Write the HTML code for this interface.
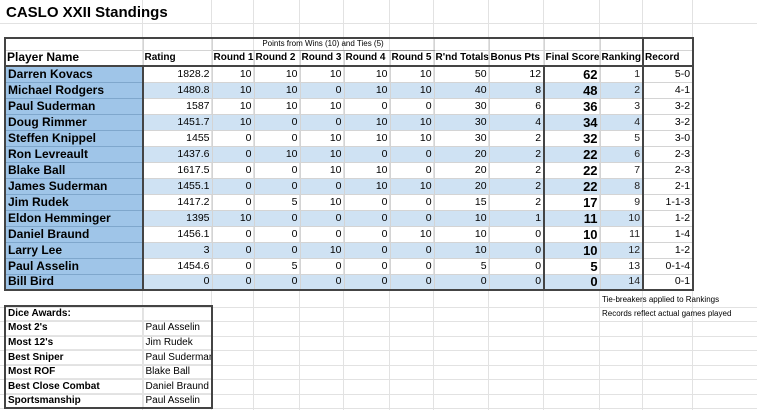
<!DOCTYPE html>
<html><head><meta charset="utf-8"><style>
body{margin:0;width:757px;height:410px;background:#fff;position:relative;overflow:hidden;font-family:"Liberation Sans",Arial,sans-serif;color:#000}
.v{position:absolute;width:1px;background:#e2e2e2;top:0;height:410px}
.h{position:absolute;height:1px;background:#e2e2e2;left:0;width:757px}
.t{position:absolute;white-space:nowrap}
table{border-collapse:collapse;table-layout:fixed;position:absolute}
td{padding:0 2px;overflow:hidden;white-space:nowrap;border:1px solid #d4d4d4;line-height:13px}
#m{left:4px;top:37px;width:689px;border:2px solid #444;font-size:10.5px}
#m tr{height:16px}
#m td{text-align:right}
#m td.n{text-align:left;font-weight:bold;font-size:12px;background:#9fc5e8;border-right:2px solid #444;border-bottom:1px solid #7fa7cc}
#m tr.b td{background:#cfe2f3}
#m tr.b td.n{background:#9fc5e8}
#m tr.b td.r{background:#fff}
#m td.f{font-weight:bold;font-size:13px;border-left:2px solid #444}
#m td.k{border-right:2px solid #444;color:#222}
#m tr.hd td{font-weight:bold;text-align:left;border-bottom:2px solid #444;font-size:10px;padding:0 1px}
#d{left:4px;top:305px;width:209px;border:2px solid #444;font-size:10px}
#d tr{height:14.6px}
#d td{border:1px solid #e4e4e4}
#d td.l{font-weight:bold}
</style></head><body>
<div class="v" style="left:142px"></div><div class="v" style="left:211px"></div><div class="v" style="left:253px"></div><div class="v" style="left:299px"></div><div class="v" style="left:343px"></div><div class="v" style="left:389px"></div><div class="v" style="left:433px"></div><div class="v" style="left:488px"></div><div class="v" style="left:543px"></div><div class="v" style="left:599px"></div><div class="v" style="left:642px"></div><div class="v" style="left:692px"></div>
<div class="h" style="top:23px"></div><div class="h" style="top:307px"></div><div class="h" style="top:321px"></div><div class="h" style="top:336px"></div><div class="h" style="top:350px"></div><div class="h" style="top:365px"></div><div class="h" style="top:379px"></div><div class="h" style="top:394px"></div><div class="h" style="top:408px"></div>
<div class="t" style="left:6px;top:4px;font-size:15px;font-weight:bold">CASLO XXII Standings</div>
<table id="m">
<colgroup><col style="width:138px"><col style="width:69px"><col style="width:42px"><col style="width:46px"><col style="width:44px"><col style="width:46px"><col style="width:44px"><col style="width:55px"><col style="width:55px"><col style="width:56px"><col style="width:43px"><col style="width:50px"></colgroup>
<tr style="height:12px"><td style="border-right:1px solid #d4d4d4"></td><td></td><td colspan="5" style="font-size:8px;line-height:10px;text-align:center;border-bottom:1px solid #999">Points from Wins (10) and Ties (5)</td><td></td><td></td><td></td><td style="border-right:2px solid #444"></td><td></td></tr>
<tr class="hd" style="height:16px"><td style="font-size:12px;border-right:1px solid #d4d4d4">Player Name</td><td>Rating</td><td>Round 1</td><td>Round 2</td><td>Round 3</td><td>Round 4</td><td>Round 5</td><td>R'nd Totals</td><td>Bonus Pts</td><td>Final Score</td><td style="border-right:2px solid #444">Ranking</td><td>Record</td></tr>
<tr><td class="n">Darren Kovacs</td><td>1828.2</td><td>10</td><td>10</td><td>10</td><td>10</td><td>10</td><td>50</td><td>12</td><td class="f">62</td><td class="k">1</td><td class="r">5-0</td></tr>
<tr class="b"><td class="n">Michael Rodgers</td><td>1480.8</td><td>10</td><td>10</td><td>0</td><td>10</td><td>10</td><td>40</td><td>8</td><td class="f">48</td><td class="k">2</td><td class="r">4-1</td></tr>
<tr><td class="n">Paul Suderman</td><td>1587</td><td>10</td><td>10</td><td>10</td><td>0</td><td>0</td><td>30</td><td>6</td><td class="f">36</td><td class="k">3</td><td class="r">3-2</td></tr>
<tr class="b"><td class="n">Doug Rimmer</td><td>1451.7</td><td>10</td><td>0</td><td>0</td><td>10</td><td>10</td><td>30</td><td>4</td><td class="f">34</td><td class="k">4</td><td class="r">3-2</td></tr>
<tr><td class="n">Steffen Knippel</td><td>1455</td><td>0</td><td>0</td><td>10</td><td>10</td><td>10</td><td>30</td><td>2</td><td class="f">32</td><td class="k">5</td><td class="r">3-0</td></tr>
<tr class="b"><td class="n">Ron Levreault</td><td>1437.6</td><td>0</td><td>10</td><td>10</td><td>0</td><td>0</td><td>20</td><td>2</td><td class="f">22</td><td class="k">6</td><td class="r">2-3</td></tr>
<tr><td class="n">Blake Ball</td><td>1617.5</td><td>0</td><td>0</td><td>10</td><td>10</td><td>0</td><td>20</td><td>2</td><td class="f">22</td><td class="k">7</td><td class="r">2-3</td></tr>
<tr class="b"><td class="n">James Suderman</td><td>1455.1</td><td>0</td><td>0</td><td>0</td><td>10</td><td>10</td><td>20</td><td>2</td><td class="f">22</td><td class="k">8</td><td class="r">2-1</td></tr>
<tr><td class="n">Jim Rudek</td><td>1417.2</td><td>0</td><td>5</td><td>10</td><td>0</td><td>0</td><td>15</td><td>2</td><td class="f">17</td><td class="k">9</td><td class="r">1-1-3</td></tr>
<tr class="b"><td class="n">Eldon Hemminger</td><td>1395</td><td>10</td><td>0</td><td>0</td><td>0</td><td>0</td><td>10</td><td>1</td><td class="f">11</td><td class="k">10</td><td class="r">1-2</td></tr>
<tr><td class="n">Daniel Braund</td><td>1456.1</td><td>0</td><td>0</td><td>0</td><td>0</td><td>10</td><td>10</td><td>0</td><td class="f">10</td><td class="k">11</td><td class="r">1-4</td></tr>
<tr class="b"><td class="n">Larry Lee</td><td>3</td><td>0</td><td>0</td><td>10</td><td>0</td><td>0</td><td>10</td><td>0</td><td class="f">10</td><td class="k">12</td><td class="r">1-2</td></tr>
<tr><td class="n">Paul Asselin</td><td>1454.6</td><td>0</td><td>5</td><td>0</td><td>0</td><td>0</td><td>5</td><td>0</td><td class="f">5</td><td class="k">13</td><td class="r">0-1-4</td></tr>
<tr class="b"><td class="n">Bill Bird</td><td>0</td><td>0</td><td>0</td><td>0</td><td>0</td><td>0</td><td>0</td><td>0</td><td class="f">0</td><td class="k">14</td><td class="r">0-1</td></tr>
</table>
<div class="t" style="left:602px;top:295px;font-size:8px">Tie-breakers applied to Rankings</div>
<div class="t" style="left:602px;top:309px;font-size:8px">Records reflect actual games played</div>
<table id="d">
<colgroup><col style="width:138px"><col style="width:69px"></colgroup>
<tr><td class="l">Dice Awards:</td><td></td></tr>
<tr><td class="l">Most 2's</td><td>Paul Asselin</td></tr>
<tr><td class="l">Most 12's</td><td>Jim Rudek</td></tr>
<tr><td class="l">Best Sniper</td><td>Paul Suderman</td></tr>
<tr><td class="l">Most ROF</td><td>Blake Ball</td></tr>
<tr><td class="l">Best Close Combat</td><td>Daniel Braund</td></tr>
<tr><td class="l">Sportsmanship</td><td>Paul Asselin</td></tr>
</table>
</body></html>
